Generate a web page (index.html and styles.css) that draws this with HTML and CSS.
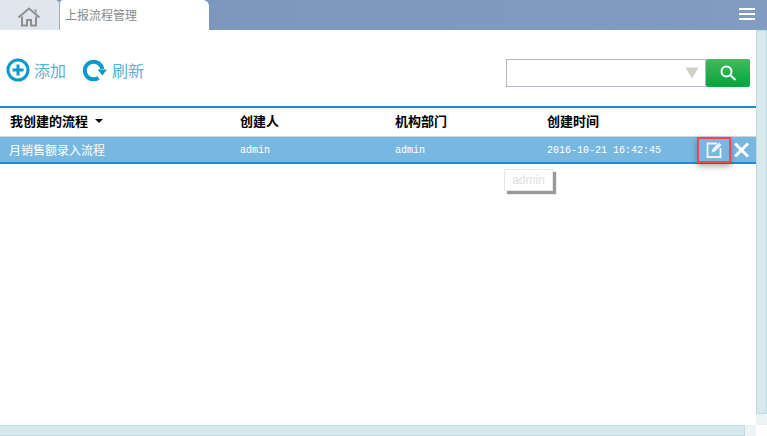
FILE: index.html
```html
<!DOCTYPE html>
<html lang="zh">
<head>
<meta charset="utf-8">
<title>上报流程管理</title>
<link rel="stylesheet" href="styles.css">
</head>
<body>
<div class="app">
  <div class="view">
    <header class="topbar">
      <div class="home-tab">
        <svg width="24" height="20" viewBox="0 0 24 20"><path d="M1.500 10.500 12 1.500l10.500 9" fill="none" stroke="#8f8f8f" stroke-width="2"/><path d="M5 9.500V18.500H10V13H14V18.500H19V9.500" fill="none" stroke="#8f8f8f" stroke-width="2"/><path d="M17 2.500h2.500V7" fill="#8f8f8f"/></svg>
      </div>
      <div class="tab">上报流程管理</div>
      <div class="spacer"></div>
      <div class="menu"><i></i><i></i><i></i></div>
    </header>
    <main class="content">
      <div class="toolbar">
        <a class="tool tool-add">
          <svg width="24" height="24" viewBox="0 0 24 24"><circle cx="12" cy="12" r="10" fill="none" stroke="#0a9ac9" stroke-width="3"/><path d="M12 6.500v11M6.500 12h11" stroke="#0a9ac9" stroke-width="3"/></svg>
          <span>添加</span>
        </a>
        <a class="tool tool-refresh">
          <svg width="24" height="24" viewBox="0 0 24 24"><path d="M15.500 19.800A8.800 8.800 0 1 1 19.300 11" fill="none" stroke="#0a9ac9" stroke-width="4"/><path d="M14.500 11.500h9.500l-4.700 6z" fill="#0a9ac9"/></svg>
          <span>刷新</span>
        </a>
        <div class="spacer"></div>
        <div class="search">
          <div class="combo">
            <svg width="14" height="12" viewBox="0 0 14 12"><path d="M0.500 0.500h13L7 11.500z" fill="#d2cfc9"/></svg>
          </div>
          <button class="search-btn">
            <svg width="18" height="18" viewBox="0 0 18 18"><circle cx="7.500" cy="7.500" r="5" fill="none" stroke="#fff" stroke-width="2"/><path d="M11 11l5.500 5" stroke="#fff" stroke-width="2"/></svg>
          </button>
        </div>
      </div>
      <div class="table">
        <div class="row head">
          <div class="c1">我创建的流程<i class="caret"></i></div>
          <div class="c2">创建人</div>
          <div class="c3">机构部门</div>
          <div class="c4">创建时间</div>
        </div>
        <div class="row item">
          <div class="c1">月销售额录入流程</div>
          <div class="c2 mono">admin</div>
          <div class="c3 mono">admin</div>
          <div class="c4 mono">2016-10-21 16:42:45</div>
          <div class="actions">
            <span class="edit">
              <svg width="18" height="18" viewBox="0 0 18 18"><path d="M12 2.500H2.500V16H15.500V7" fill="none" stroke="#eef6fb" stroke-width="1.800"/><path d="M6.500 11.500 7.500 8 14 1.500 16.500 4 10 10.500z" fill="#eef6fb"/></svg>
            </span>
            <span class="close">
              <svg width="17" height="16" viewBox="0 0 17 16"><path d="M2 1.500l13 13M15 1.500l-13 13" stroke="#fff" stroke-width="3"/></svg>
            </span>
          </div>
          <div class="tooltip">admin</div>
        </div>
      </div>
    </main>
    <div class="hscroll"><div class="hthumb"></div><div class="hend"></div></div>
  </div>
  <div class="vscroll"><div class="vgap"></div><div class="vthumb"></div><div class="vend"></div><div class="vcorner"></div></div>
</div>
</body>
</html>
```
FILE: styles.css
```css
* { box-sizing: border-box; }
html, body { margin: 0; height: 100%; overflow: hidden; background: #fff; }
body { font-family: "Noto Sans CJK SC", "Liberation Sans", sans-serif; }
.app { display: flex; width: 767px; height: 436px; }
.view { width: 756px; display: flex; flex-direction: column; }
.topbar { display: flex; height: 30px; width: 767px; background: linear-gradient(90deg, #7b95bb, #829cc1); flex: none; position: relative; z-index: 1; }
.spacer { flex: 1; }
.home-tab { width: 59px; background: #e0e6f0; border-top-right-radius: 4px; display: flex; align-items: center; justify-content: center; padding: 3px 2px 0 0; }
.tab { width: 150px; background: #fff; border-left: 1px solid #a9a9a9; border-top-left-radius: 4px; border-top-right-radius: 6px; color: #8a8a8a; font-size: 12px; line-height: 30px; padding-left: 5px; }
.menu { width: 16px; margin: 8px 12px 0 0; display: flex; flex-direction: column; gap: 3px; }
.menu i { display: block; height: 2px; background: #fff; }
.content { flex: 1; min-height: 0; }
.toolbar { height: 76px; display: flex; align-items: center; padding: 4px 6px 0 6px; }
.tool { display: flex; align-items: center; color: #5fb0d6; font-size: 16px; }
.tool-add { width: 77px; gap: 4px; }
.tool-refresh { gap: 5px; }
.search { display: flex; height: 28px; margin-top: 6px; }
.combo { width: 200px; border: 1px solid #b3b8cc; display: flex; align-items: center; justify-content: flex-end; padding: 0 6px 0 0; }
.search-btn { width: 44px; border: 0; padding: 0; border-radius: 2px; background: linear-gradient(#45b95c, #00a63c); display: flex; align-items: center; justify-content: center; }
.table { border-top: 2px solid #1f8ad0; position: relative; }
.row { display: flex; align-items: center; position: relative; }
.head { height: 29px; border-bottom: 1px solid #d4d4d4; color: #000; font-size: 13px; font-weight: 700; padding-bottom: 4px; }
.item { height: 27px; background: #78b8e0; border-bottom: 2px solid #1f8ad0; color: #fff; font-size: 12px; }
.c1 { width: 240px; padding-left: 9px; display: flex; align-items: center; }
.head .c1 { padding-left: 10px; }
.c2 { width: 155px; }
.c3 { width: 152px; }
.c4 { width: 148px; }
.mono { font-family: "Liberation Mono", monospace; font-size: 10px; padding-top: 1px; }
.caret { display: inline-block; margin-left: 7px; margin-top: 2px; border: 4px solid transparent; border-top: 4px solid #111; border-bottom: 0; }
.actions { display: flex; align-items: center; gap: 2px; margin-left: 2px; }
.edit { width: 34px; height: 26px; border: 2px solid #f04848; display: flex; align-items: center; justify-content: center; box-shadow: 0 3px 6px rgba(40,60,80,.45); position: relative; z-index: 1; }
.close { display: flex; }
.tooltip { position: absolute; left: 504px; top: 32px; width: 49px; height: 22px; background: #fff; border: 1px solid #e8e8e8; box-shadow: 3px 3px 1px #999; color: #e0e0e0; font: 12px "Liberation Sans", sans-serif; line-height: 20px; text-align: center; }
.hscroll { height: 11px; display: flex; flex: none; }
.hthumb { width: 745px; background: #d8e9ee; border: 1px solid #bcdbe2; border-left: 0; }
.hend { width: 11px; background: #ecf3f5; }
.vscroll { width: 11px; display: flex; flex-direction: column; }
.vgap { height: 30px; flex: none; }
.vthumb { height: 384px; background: #d8e9ee; border: 1px solid #bcdbe2; flex: none; }
.vend { height: 11px; background: #ecf3f5; flex: none; }
.vcorner { flex: 1; }
```
